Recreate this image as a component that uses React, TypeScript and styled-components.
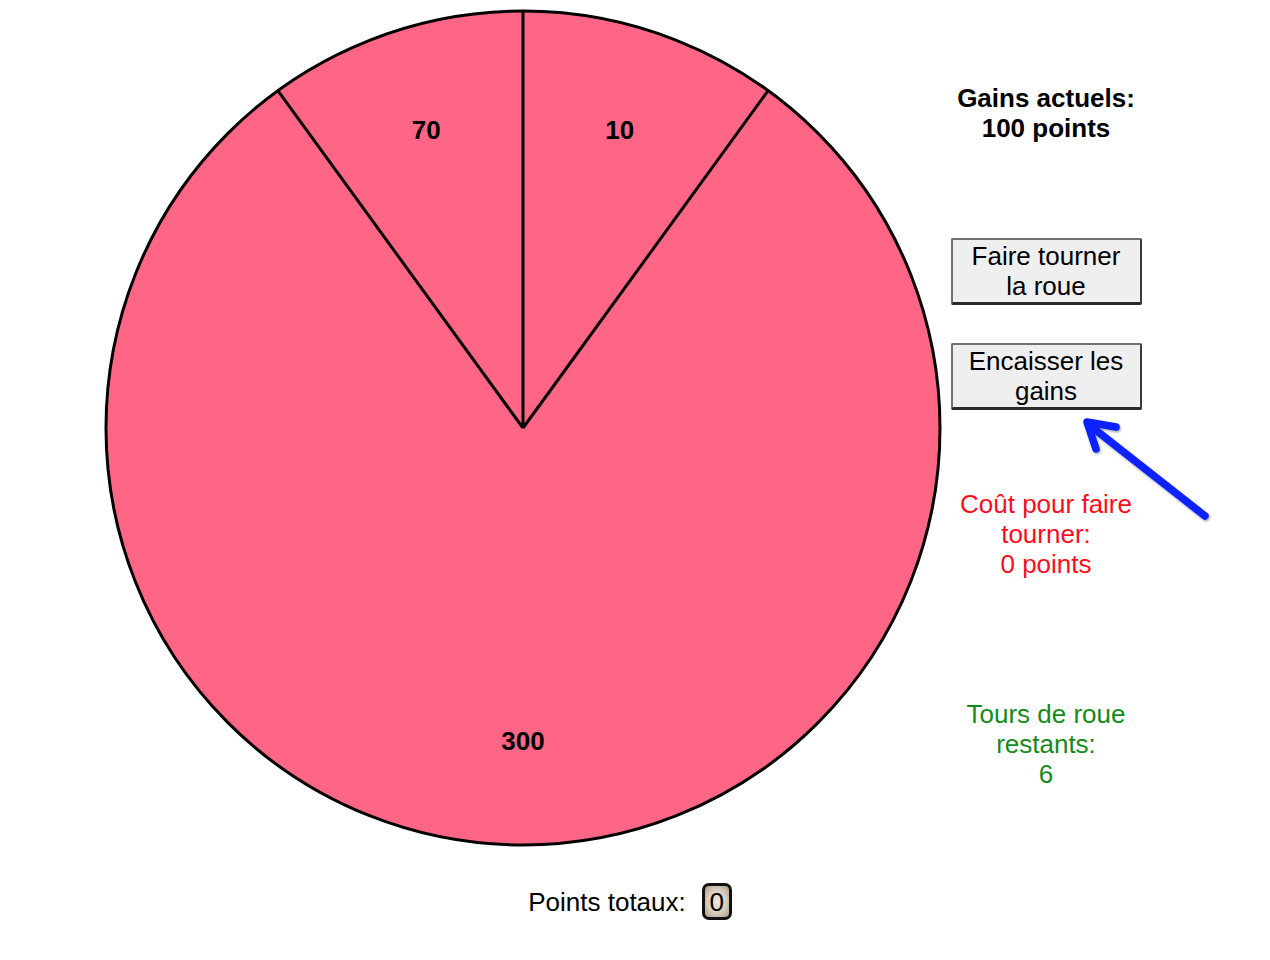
import React from "react";
import styled, { createGlobalStyle } from "styled-components";

const Global = createGlobalStyle`
  html, body { margin: 0; padding: 0; background: #fff; }
  body { font-family: "Liberation Sans", Arial, Helvetica, sans-serif; color: #000; }
`;

const Page = styled.div`
  position: relative;
  width: 1270px;
  height: 960px;
  overflow: hidden;
`;

const Main = styled.div`
  display: flex;
  align-items: flex-start;
`;

const WheelBox = styled.div`
  width: 850px;
  height: 850px;
  margin: 3px 0 0 98px;
  flex: none;
`;

const Panel = styled.div`
  width: 200px;
  margin-left: -2px;
  padding-top: 83px;
  display: flex;
  flex-direction: column;
  align-items: center;
  text-align: center;
  font-size: 26px;
  line-height: 30px;
`;

const Gains = styled.div`
  font-weight: bold;
`;

const SpinButton = styled.button<{ $top: number }>`
  margin-top: ${(p) => p.$top}px;
  width: 191px;
  height: 67px;
  padding: 1px 4px 3px;
  box-sizing: border-box;
  background: #efefef;
  border: 2px solid #707070;
  border-bottom: 3px solid #2a2a2a;
  border-right-color: #3c3c3c;
  border-radius: 2px;
  font-family: inherit;
  font-size: 26px;
  line-height: 30px;
  color: #000;
  cursor: pointer;
`;

const Info = styled.div<{ $top: number; $color: string }>`
  margin-top: ${(p) => p.$top}px;
  color: ${(p) => p.$color};
`;

const Footer = styled.div`
  display: flex;
  justify-content: center;
  align-items: center;
  gap: 16px;
  margin-top: 30px;
  padding-right: 10px;
  font-size: 26px;
  line-height: 30px;
`;

const Counter = styled.span`
  display: inline-flex;
  align-items: center;
  justify-content: center;
  width: 30px;
  height: 37px;
  box-sizing: border-box;
  border: 3px solid #111;
  border-radius: 7px;
  background: radial-gradient(ellipse at center, #efe7dc 0%, #d8ccbc 55%, #a79a8a 100%);
  font-size: 26px;
`;

const Arrow = styled.svg`
  position: absolute;
  left: 1070px;
  top: 405px;
  overflow: visible;
`;

const CX = 425;
const CY = 425;
const R = 417;

function pt(deg: number, r: number) {
  const a = ((deg - 90) * Math.PI) / 180;
  return [CX + r * Math.cos(a), CY + r * Math.sin(a)];
}

const slices = [
  { from: 0, to: 36, label: "10" },
  { from: 36, to: 324, label: "300" },
  { from: 324, to: 360, label: "70" },
];

function Wheel() {
  return (
    <svg width={850} height={850} viewBox="0 0 850 850">
      <circle cx={CX} cy={CY} r={R} fill="#ff6685" stroke="#000" strokeWidth={3} />
      {[0, 36, 324].map((d) => {
        const [x, y] = pt(d, R);
        return <line key={d} x1={CX} y1={CY} x2={x} y2={y} stroke="#000" strokeWidth={3} />;
      })}
      {slices.map((s) => {
        const [x, y] = pt((s.from + s.to) / 2, 313);
        return (
          <text
            key={s.label}
            x={x}
            y={y + 9}
            textAnchor="middle"
            fontFamily='"Liberation Sans", Arial, sans-serif'
            fontWeight="bold"
            fontSize={26}
          >
            {s.label}
          </text>
        );
      })}
    </svg>
  );
}

export default function App() {
  return (
    <Page>
      <Global />
      <Main>
        <WheelBox>
          <Wheel />
        </WheelBox>
        <Panel>
          <Gains>
            Gains actuels:
            <br />
            100 points
          </Gains>
          <SpinButton $top={95}>
            Faire tourner
            <br />
            la roue
          </SpinButton>
          <SpinButton $top={38}>
            Encaisser les
            <br />
            gains
          </SpinButton>
          <Info $top={79} $color="#ff0d1d">
            Coût pour faire
            <br />
            tourner:
            <br />0 points
          </Info>
          <Info $top={120} $color="#158a18">
            Tours de roue
            <br />
            restants:
            <br />6
          </Info>
        </Panel>
      </Main>
      <Footer>
        <span>Points totaux:</span>
        <Counter>0</Counter>
      </Footer>
      <Arrow width={150} height={130} viewBox="0 0 150 130">
        <defs>
          <filter id="sh" x="-20%" y="-20%" width="140%" height="140%">
            <feDropShadow dx="1" dy="1.5" stdDeviation="1.2" floodColor="#000" floodOpacity="0.35" />
          </filter>
        </defs>
        <g stroke="#0a24ff" strokeWidth={7.5} strokeLinecap="round" strokeLinejoin="round" fill="none" filter="url(#sh)">
          <line x1={135} y1={111} x2={18} y2={19} />
          <polyline points="46,22 17,17 26,44" />
        </g>
      </Arrow>
    </Page>
  );
}
